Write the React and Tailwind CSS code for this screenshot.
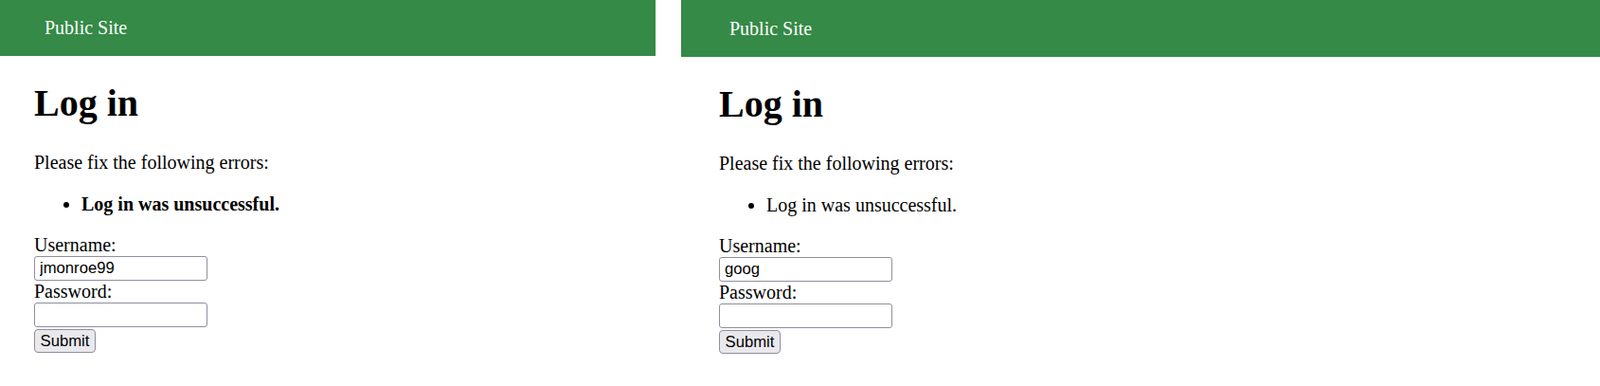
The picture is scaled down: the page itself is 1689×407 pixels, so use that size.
import React from 'react';

const LoginPanel = ({ width, headerHeight, inset, username, boldError }) => {
  return (
    <div className="flex flex-col bg-white" style={{ width }}>
      {/* Header */}
      <div
        className="flex items-center bg-[#348a46] text-white text-[20px] leading-[23px]"
        style={{ height: headerHeight, paddingLeft: inset + 11 }}
      >
        Public Site
      </div>

      {/* Content */}
      <div className="text-[20px] leading-[23px] text-black" style={{ paddingLeft: inset }}>
        <h1 className="mt-[27px] text-[40px] leading-[46px] font-bold">Log in</h1>
        <p className="mt-[28px]">Please fix the following errors:</p>
        <ul className="mt-[21px] pl-[50px] list-disc">
          <li className={boldError ? 'font-bold' : ''}>Log in was unsuccessful.</li>
        </ul>

        <form className="mt-[20px]" onSubmit={(e) => e.preventDefault()}>
          <label className="block">Username:</label>
          <input
            type="text"
            defaultValue={username}
            className="block w-[183px] h-[26px] px-[5px] border border-[#8f8f9d] rounded-[3px] bg-white text-[16.67px] font-['Liberation_Sans',Arial,sans-serif] text-black outline-none"
          />
          <label className="block">Password:</label>
          <input
            type="password"
            className="block w-[183px] h-[26px] px-[5px] border border-[#8f8f9d] rounded-[3px] bg-white text-[16.67px] font-['Liberation_Sans',Arial,sans-serif] outline-none"
          />
          <button
            type="submit"
            className="block mt-[2px] w-[65px] h-[25px] border border-[#8f8f9d] rounded-[4px] bg-[#e9e9ed] text-[16.67px] leading-[20px] font-['Liberation_Sans',Arial,sans-serif] text-black"
          >
            Submit
          </button>
        </form>
      </div>
    </div>
  );
};

export default function App() {
  return (
    <div className="flex gap-[27px] w-[1689px] h-[407px] bg-white overflow-hidden font-['Liberation_Serif','Times_New_Roman',serif]">
      <LoginPanel width={692} headerHeight={59} inset={36} username="jmonroe99" boldError />
      <LoginPanel width={970} headerHeight={60} inset={40} username="goog" />
    </div>
  );
}
